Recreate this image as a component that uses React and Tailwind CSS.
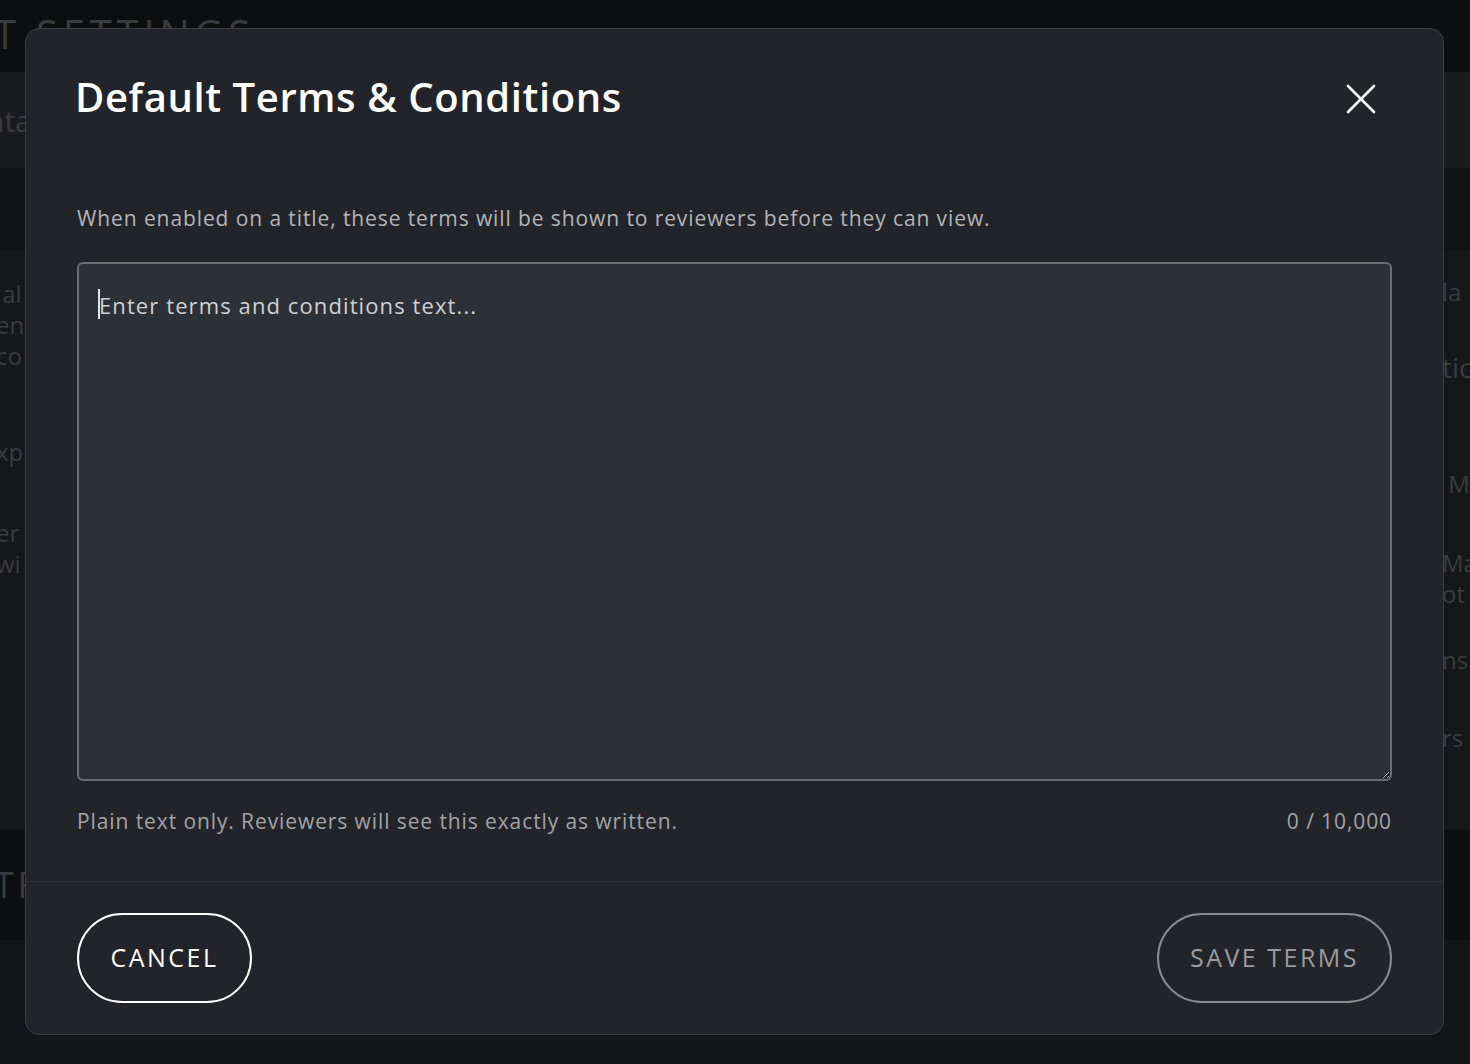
import { useState } from 'react';

const Backdrop = () => (
  <div className="min-h-[1064px] w-full bg-[#141518] text-[#3a3b3f] overflow-hidden">
    {/* page title band */}
    <div className="h-[72px] bg-[#0d0e10] flex items-start">
      <span className="ml-[-6px] mt-[14px] text-[40px] tracking-[0.12em] leading-none">T SETTINGS</span>
    </div>
    <div className="h-[96px] bg-[#1a1b1f] flex items-center justify-between">
      <span className="ml-[-14px] text-[30px]">nta</span>
    </div>
    <div className="h-[82px] bg-[#111215]" />
    <div className="h-[580px] bg-[#16171a] flex justify-between">
      <div className="flex flex-col text-[24px] leading-[31px] ml-[-4px]">
        <span className="mt-[28px]">&nbsp;al</span>
        <span>en</span>
        <span>co</span>
        <span className="mt-[65px]">xp</span>
        <span className="mt-[50px]">er</span>
        <span>wi</span>
      </div>
      <div className="flex flex-col text-[24px] leading-[31px] w-[28px]">
        <span className="mt-[26px]">la</span>
        <span className="mt-[45px] text-[28px]">tio</span>
        <span className="mt-[85px]">&nbsp;M</span>
        <span className="mt-[48px]">Ma</span>
        <span>ot</span>
        <span className="mt-[35px]">ns</span>
        <span className="mt-[47px]">rs</span>
      </div>
    </div>
    <div className="h-[110px] bg-[#0e0f11] flex items-center">
      <span className="ml-[-6px] text-[36px] tracking-[0.1em]">TR</span>
    </div>
    <div className="h-[124px] bg-[#141518]" />
  </div>
);

export default function App() {
  const [text, setText] = useState('');

  return (
    <div className="relative h-[1064px] w-full overflow-hidden" style={{ fontFamily: '"Open Sans", "Noto Sans", sans-serif' }}>
      <Backdrop />

      {/* Modal */}
      <div className="absolute left-[25px] top-[28px] w-[1419px] h-[1007px] bg-[#232429] border border-[#3c3d42] rounded-[14px] flex flex-col">
        <div className="pl-[49px] pr-[51px] pt-[44px] flex items-start justify-between">
          <h2 className="text-[40px] leading-[48px] font-semibold text-white tracking-[0.015em]">Default Terms &amp; Conditions</h2>
          <button className="mt-[10px] mr-[15px] text-white" aria-label="Close">
            <svg width="32" height="32" viewBox="0 0 32 32" fill="none" stroke="currentColor" strokeWidth="2.6" strokeLinecap="round">
              <path d="M3 3 L29 29 M29 3 L3 29" />
            </svg>
          </button>
        </div>

        <div className="px-[51px] flex-1 flex flex-col">
          <p className="mt-[83px] text-[21px] leading-[28px] text-[#b3b4b8] tracking-[0.043em]">
            When enabled on a title, these terms will be shown to reviewers before they can view.
          </p>
          <div className="relative mt-[30px]">
            <textarea
              value={text}
              onChange={(e) => setText(e.target.value)}
              placeholder="Enter terms and conditions text..."
              className="block h-[519px] w-full rounded-[6px] border-2 border-[#6b6c70] bg-[#2e3038] px-[20px] py-[26px] text-[22px] leading-[30px] text-white placeholder:text-[#cfd0d3] outline-none resize-y tracking-[0.05em]"
            />
            {/* focused caret */}
            {text.length === 0 && (
              <span className="pointer-events-none absolute left-[21px] top-[27px] h-[30px] w-[2px] bg-[#e6e6e8]" />
            )}
          </div>
          <div className="mt-[26px] flex items-center justify-between text-[21px] leading-[28px] text-[#a2a3a7] tracking-[0.043em]">
            <span>Plain text only. Reviewers will see this exactly as written.</span>
            <span>{text.length} / 10,000</span>
          </div>
        </div>

        <div className="border-t border-[#34353a] px-[51px] pt-[31px] pb-[31px] flex items-center justify-between">
          <button className="h-[90px] w-[175px] rounded-full border-2 border-white text-white text-[25px] tracking-[0.1em]">
            CANCEL
          </button>
          <button className="h-[90px] w-[235px] rounded-full border-2 border-[#8a8b8f] text-[#9a9b9f] text-[25px] tracking-[0.1em]">
            SAVE TERMS
          </button>
        </div>
      </div>
    </div>
  );
}
